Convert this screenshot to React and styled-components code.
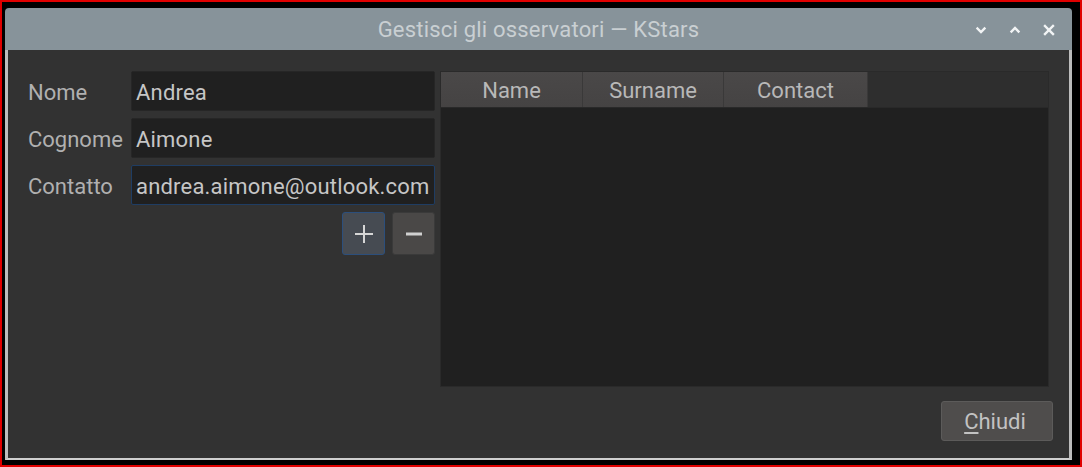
import React from "react";
import styled, { createGlobalStyle } from "styled-components";

const GlobalStyle = createGlobalStyle`
  html, body {
    margin: 0;
    padding: 0;
    background: #000;
  }
  body {
    font-family: Roboto, "Liberation Sans", sans-serif;
  }
  * {
    box-sizing: border-box;
  }
`;

const Screen = styled.div`
  width: 1082px;
  height: 467px;
  border: 2px solid #e00000;
  background: #000;
  padding: 6px 0 0 3px;
`;

const Window = styled.div`
  width: 1067px;
  height: 452px;
  display: flex;
  flex-direction: column;
`;

const TitleBar = styled.div`
  height: 42px;
  background: #87939a;
  border-radius: 4px 4px 0 0;
  display: grid;
  grid-template-columns: 1fr auto 1fr;
  align-items: center;
  padding: 0 17px;
`;

const Title = styled.div`
  grid-column: 2;
  color: #c9cfd2;
  font-size: 22px;
  letter-spacing: 0.2px;
`;

const Controls = styled.div`
  grid-column: 3;
  justify-self: end;
  display: flex;
  align-items: center;
  gap: 22px;
  padding-top: 2px;
`;

const Body = styled.div`
  flex: 1;
  background: #323232;
  border: 3px solid #bdbdbd;
  border-top: none;
  border-bottom: 2px solid #cfcfcf;
  padding: 21px 16px 15px 20px;
  display: flex;
  flex-direction: column;
`;

const Main = styled.div`
  display: flex;
  gap: 5px;
  height: 316px;
`;

const Form = styled.div`
  width: 407px;
  display: flex;
  flex-direction: column;
  gap: 7px;
`;

const Row = styled.div`
  display: flex;
  align-items: center;
  height: 40px;
`;

const Label = styled.div`
  width: 103px;
  color: #b0b0b0;
  font-size: 22px;
  white-space: nowrap;
  padding-top: 2px;
`;

const Field = styled.div`
  flex: 1;
  height: 40px;
  background: #202020;
  border: 1px solid ${(p) => (p.focused ? "#1f3d63" : "#262626")};
  border-radius: 2px;
  color: #c6c6c6;
  font-size: 22px;
  letter-spacing: 0.2px;
  display: flex;
  align-items: center;
  padding: 2px 0 0 4px;
  white-space: nowrap;
  overflow: hidden;
`;

const ButtonRow = styled.div`
  display: flex;
  justify-content: flex-end;
  gap: 7px;
`;

const SquareButton = styled.div`
  width: 43px;
  height: 43px;
  border-radius: 3px;
  background: ${(p) => (p.active ? "#464b52" : "#4a4847")};
  border: 1px solid ${(p) => (p.active ? "#2c4f7c" : "#3a3a3a")};
  display: flex;
  align-items: center;
  justify-content: center;
`;

const Table = styled.div`
  width: 609px;
  background: #202020;
  border: 1px solid #2a2a2a;
  display: flex;
  flex-direction: column;
`;

const HeaderRow = styled.div`
  height: 36px;
  display: flex;
  background: #2e2e2e;
  border-bottom: 1px solid #292929;
`;

const HeaderCell = styled.div`
  width: ${(p) => p.w}px;
  background: linear-gradient(#4a4848, #454343);
  border-right: 1px solid #3a3939;
  color: #b8b8b8;
  font-size: 22px;
  display: flex;
  align-items: center;
  justify-content: center;
  padding-top: 2px;
`;

const Footer = styled.div`
  margin-top: 14px;
  display: flex;
  justify-content: flex-end;
`;

const CloseButton = styled.div`
  width: 112px;
  height: 40px;
  background: #4f4d4c;
  border: 1px solid #5c5b5a;
  border-radius: 3px;
  color: #c2c2c2;
  font-size: 22px;
  display: flex;
  align-items: center;
  justify-content: center;
  padding-right: 4px;
`;

const Mnemonic = styled.span`
  text-decoration: underline;
  text-underline-offset: 3px;
`;

const Icon = ({ children }) => (
  <svg width="12" height="12" viewBox="0 0 12 12" fill="none" stroke="#f2f4f5" strokeWidth="2.4" strokeLinecap="square">
    {children}
  </svg>
);

const fields = [
  { label: "Nome", value: "Andrea" },
  { label: "Cognome", value: "Aimone" },
  { label: "Contatto", value: "andrea.aimone@outlook.com", focused: true },
];

const columns = [
  { name: "Name", w: 142 },
  { name: "Surname", w: 141 },
  { name: "Contact", w: 144 },
];

export default function App() {
  return (
    <>
      <GlobalStyle />
      <Screen>
        <Window>
          <TitleBar>
            <Title>Gestisci gli osservatori — KStars</Title>
            <Controls>
              <Icon>
                <polyline points="2.5,4.5 6,8 9.5,4.5" />
              </Icon>
              <Icon>
                <polyline points="2.5,7.5 6,4 9.5,7.5" />
              </Icon>
              <Icon>
                <line x1="2" y1="2" x2="10" y2="10" />
                <line x1="10" y1="2" x2="2" y2="10" />
              </Icon>
            </Controls>
          </TitleBar>
          <Body>
            <Main>
              <Form>
                {fields.map((f) => (
                  <Row key={f.label}>
                    <Label>{f.label}</Label>
                    <Field focused={f.focused}>{f.value}</Field>
                  </Row>
                ))}
                <ButtonRow>
                  <SquareButton active>
                    <svg width="20" height="20" viewBox="0 0 20 20" stroke="#d6d6d6" strokeWidth="2">
                      <line x1="10" y1="1" x2="10" y2="19" />
                      <line x1="1" y1="10" x2="19" y2="10" />
                    </svg>
                  </SquareButton>
                  <SquareButton>
                    <svg width="18" height="20" viewBox="0 0 18 20" stroke="#d0d0d0" strokeWidth="3">
                      <line x1="1" y1="10" x2="17" y2="10" />
                    </svg>
                  </SquareButton>
                </ButtonRow>
              </Form>
              <Table>
                <HeaderRow>
                  {columns.map((c) => (
                    <HeaderCell key={c.name} w={c.w}>
                      {c.name}
                    </HeaderCell>
                  ))}
                </HeaderRow>
              </Table>
            </Main>
            <Footer>
              <CloseButton>
                <Mnemonic>C</Mnemonic>hiudi
              </CloseButton>
            </Footer>
          </Body>
        </Window>
      </Screen>
    </>
  );
}
